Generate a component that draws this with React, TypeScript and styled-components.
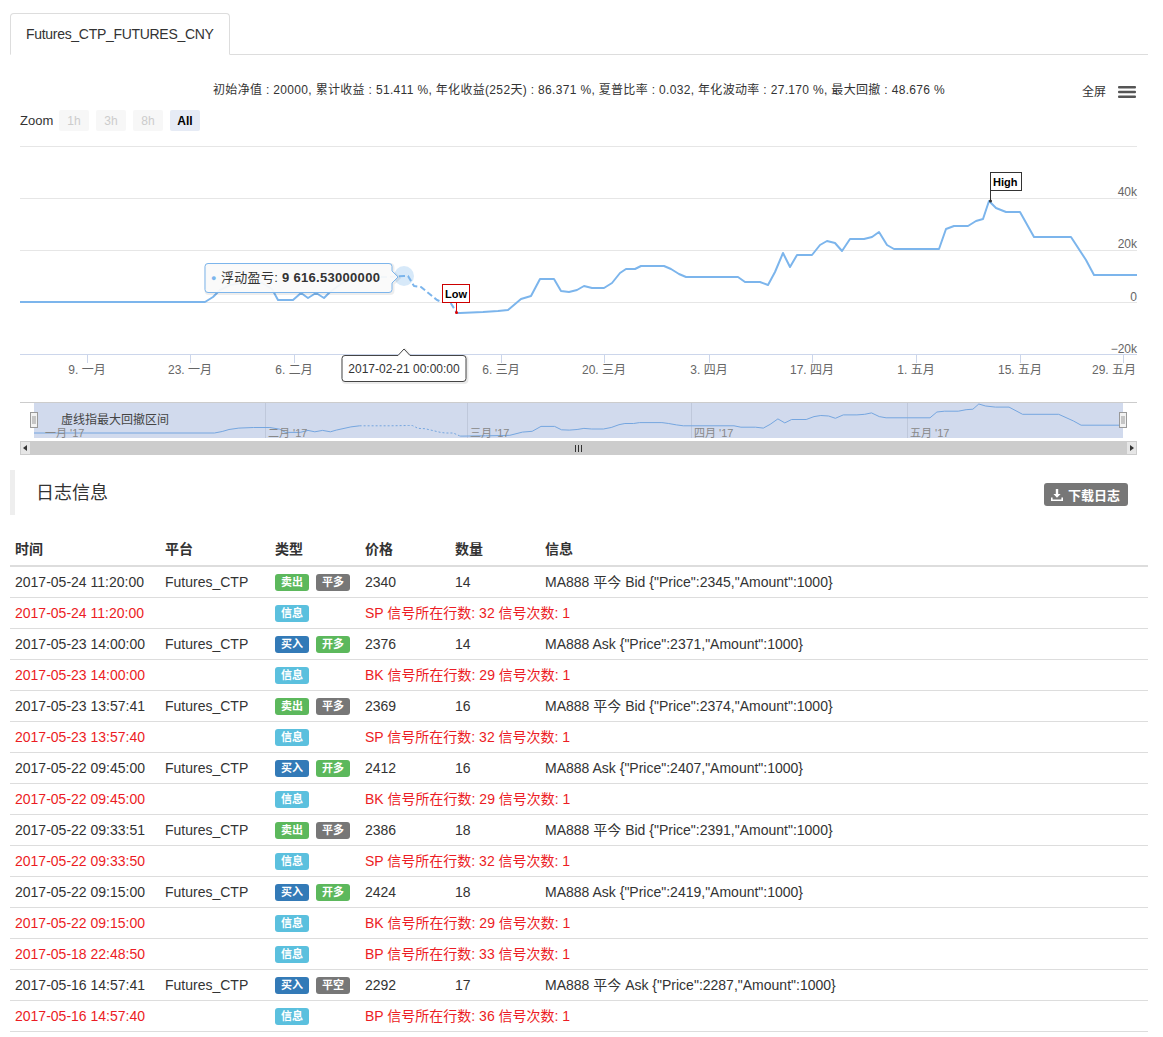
import React from 'react';
import styled, { createGlobalStyle } from 'styled-components';

const GlobalStyle = createGlobalStyle`
  html, body { margin: 0; padding: 0; background: #fff; }
  body {
    font-family: "Liberation Sans", Arial, "Noto Sans CJK SC", sans-serif;
    font-size: 14px;
    color: #333;
  }
  * { box-sizing: border-box; }
`;

const Page = styled.div`
  width: 1163px;
  padding: 13px 15px 20px 10px;
`;

const TabBar = styled.div`
  display: flex;
  border-bottom: 1px solid #ddd;
`;

const Tab = styled.div`
  margin-bottom: -1px;
  padding: 10px 15px;
  line-height: 20px;
  font-size: 14px;
  letter-spacing: -0.3px;
  color: #333;
  background: #fff;
  border: 1px solid #ddd;
  border-bottom-color: transparent;
  border-radius: 4px 4px 0 0;
`;

const ChartBox = styled.div`
  width: 1138px;
`;

const TitleRow = styled.div`
  display: grid;
  grid-template-columns: 1fr auto 1fr;
  align-items: start;
  margin-top: 26px;
`;

const Stats = styled.div`
  grid-column: 2;
  font-size: 12px;
  line-height: 18px;
  letter-spacing: 0.33px;
  color: #333;
  white-space: nowrap;
`;

const ExportControls = styled.div`
  grid-column: 3;
  justify-self: end;
  display: flex;
  align-items: center;
  gap: 12px;
  margin-top: 3px;
  padding-right: 12px;
  font-size: 12px;
  line-height: 16px;
  color: #333;
`;

const ZoomRow = styled.div`
  display: flex;
  align-items: center;
  gap: 7px;
  margin-top: 10px;
  padding-left: 10px;
  height: 21px;
`;

const ZoomLabel = styled.span`
  width: 32px;
  font-size: 13px;
  color: #333;
`;

const ZoomButton = styled.span<{ $active?: boolean }>`
  width: 30px;
  height: 21px;
  display: flex;
  align-items: center;
  justify-content: center;
  border-radius: 2px;
  font-size: 12px;
  background: ${p => (p.$active ? '#e6ebf5' : '#f7f7f7')};
  color: ${p => (p.$active ? '#000' : '#ccc')};
  font-weight: ${p => (p.$active ? 'bold' : 'normal')};
`;

const ChartSvg = styled.svg`
  display: block;
  margin-top: 9px;
  font-family: "Liberation Sans", Arial, "Noto Sans CJK SC", sans-serif;
`;

const LogSection = styled.div`
  margin-top: 10px;
  width: 1138px;
`;

const LogHeader = styled.div`
  display: flex;
  align-items: center;
  justify-content: space-between;
  height: 45px;
  border-left: 5px solid #eee;
  padding-left: 21px;
  padding-right: 20px;
`;

const LogTitle = styled.h3`
  margin: 0;
  font-size: 18px;
  font-weight: normal;
  color: #333;
  line-height: 24px;
`;

const DownloadButton = styled.span`
  display: flex;
  align-items: center;
  gap: 5px;
  height: 23px;
  margin-top: 4px;
  padding: 0 8px 0 7px;
  background: #777;
  color: #fff;
  font-size: 13px;
  font-weight: bold;
  border-radius: 3px;
`;

const Table = styled.table`
  width: 100%;
  margin-top: 14px;
  border-collapse: collapse;
  table-layout: fixed;
  font-size: 14px;
`;

const Th = styled.th`
  text-align: left;
  font-weight: bold;
  padding: 10px 5px 6px;
  line-height: 20px;
  border-bottom: 2px solid #ddd;
  color: #333;
`;

const Td = styled.td<{ $red?: boolean }>`
  padding: 5px;
  line-height: 20px;
  border-bottom: 1px solid #ddd;
  color: ${p => (p.$red ? '#ec1c24' : '#333')};
  white-space: nowrap;
`;

const BadgeGroup = styled.div`
  display: flex;
  align-items: center;
  gap: 7px;
  height: 20px;
`;

type Kind = 'success' | 'default' | 'primary' | 'info';
const badgeColors: Record<Kind, string> = {
  success: '#5cb85c',
  default: '#777777',
  primary: '#337ab7',
  info: '#5bc0de',
};

const Badge = styled.span<{ $kind: Kind }>`
  display: inline-block;
  padding: 3px 6px;
  font-size: 11px;
  line-height: 11px;
  font-weight: bold;
  color: #fff;
  border-radius: 3px;
  background: ${p => badgeColors[p.$kind]};
`;

type Pt = [number, number];

const solidA: Pt[] = [
  [20, 302], [205, 302], [213, 297], [220, 290], [230, 285], [245, 283], [262, 283],
  [272, 289], [278, 300], [293, 300], [301, 293], [308, 298], [316, 293], [324, 298],
  [330, 292], [345, 281], [354, 277],
];
const dashed: Pt[] = [
  [354, 277], [385, 277], [404, 276], [408, 276], [414, 286], [421, 287], [437, 300],
  [442, 302], [450, 302], [457, 313],
];
const solidB: Pt[] = [
  [457, 313], [460, 313], [483, 312], [498, 311], [508, 310], [521, 299], [531, 296],
  [540, 279], [554, 279], [561, 291], [569, 292], [577, 290], [584, 286], [592, 288],
  [604, 288], [612, 283], [620, 273], [626, 269], [635, 269], [641, 266], [664, 266],
  [671, 269], [679, 274], [686, 277], [738, 277], [745, 282], [760, 282], [768, 285],
  [775, 272], [783, 253], [790, 267], [797, 255], [812, 255], [820, 245], [827, 241],
  [835, 243], [842, 251], [850, 239], [864, 239], [872, 237], [879, 232], [887, 245],
  [894, 249], [939, 249], [946, 229], [954, 226], [968, 226], [976, 221], [983, 219],
  [989, 201], [996, 208], [1006, 212], [1020, 212], [1034, 237], [1071, 237],
  [1086, 260], [1094, 275], [1137, 275],
];

const toPath = (pts: Pt[], fx = (x: number) => x, fy = (y: number) => y) =>
  pts.map((p, i) => `${i ? 'L' : 'M'}${fx(p[0]).toFixed(1)} ${fy(p[1]).toFixed(1)}`).join(' ');

const navX = (x: number) => 34 + (x - 20) * 0.975;
const navY = (y: number) => 346.3 + y * 0.287;

const gridYs = [146, 198, 250, 302];
const yLabels: [number, string][] = [
  [196, '40k'], [248, '20k'], [301, '0'], [353, '\u221220k'],
];
const xTicks: [number, number, string][] = [
  [87, 87, '9. 一月'], [190, 190, '23. 一月'], [294, 294, '6. 二月'], [398, 398, ''],
  [501, 501, '6. 三月'], [604, 604, '20. 三月'], [709, 709, '3. 四月'],
  [812, 812, '17. 四月'], [916, 916, '1. 五月'], [1020, 1020, '15. 五月'],
  [1123, 1114, '29. 五月'],
];
const navMonths: [number, string][] = [
  [20, '一月 \'17'], [265, '二月 \'17'], [467, '三月 \'17'], [691, '四月 \'17'], [907, '五月 \'17'],
];

const Chart: React.FC = () => (
  <ChartSvg width={1138} height={320} viewBox="10 140 1138 320">
    {gridYs.map(y => (
      <line key={y} x1={20} x2={1137} y1={y + 0.5} y2={y + 0.5} stroke="#e6e6e6" strokeWidth={1} />
    ))}
    <line x1={20} x2={1137} y1={354.5} y2={354.5} stroke="#ccd6eb" strokeWidth={1} />
    {xTicks.map(([t]) => (
      <line key={t} x1={t + 0.5} x2={t + 0.5} y1={355} y2={363} stroke="#ccd6eb" strokeWidth={1} />
    ))}
    {xTicks.map(([t, lx, txt]) =>
      txt ? (
        <text key={`l${t}`} x={lx} y={374} fontSize={12} fill="#666" textAnchor="middle">{txt}</text>
      ) : null
    )}
    {yLabels.map(([y, txt]) => (
      <text key={txt} x={1137} y={y} fontSize={12} fill="#666" textAnchor="end">{txt}</text>
    ))}

    <path d={toPath(solidA)} fill="none" stroke="#7cb5ec" strokeWidth={2} strokeLinejoin="round" />
    <path d={toPath(dashed)} fill="none" stroke="#7cb5ec" strokeWidth={2} strokeDasharray="6 3" strokeLinejoin="round" />
    <path d={toPath(solidB)} fill="none" stroke="#7cb5ec" strokeWidth={2} strokeLinejoin="round" />

    <circle cx={404} cy={276} r={10} fill="#7cb5ec" fillOpacity={0.3} />

    {/* High flag */}
    <line x1={990.5} x2={990.5} y1={190} y2={201} stroke="#333" strokeWidth={1} />
    <circle cx={990.5} cy={201} r={1.5} fill="#333" />
    <rect x={990.5} y={172.5} width={31} height={18} fill="#fff" stroke="#333" strokeWidth={1} />
    <text x={993} y={185.5} fontSize={11} fontWeight="bold" fill="#000">High</text>

    {/* Low flag */}
    <line x1={456.5} x2={456.5} y1={302} y2={312} stroke="#d00" strokeWidth={1} />
    <circle cx={456.5} cy={312.5} r={1.5} fill="#d00" />
    <rect x={442.5} y={284.5} width={27} height={18} fill="#fff" stroke="#c00" strokeWidth={1} />
    <text x={456} y={297.5} fontSize={11} fontWeight="bold" fill="#000" textAnchor="middle">Low</text>

    {/* value tooltip */}
    <path
      d="M209 264.5 H390 Q393 264.5 393 267.5 V272 L399 278 L393 284 V290.5 Q393 293.5 390 293.5 H209 Q206 293.5 206 290.5 V267.5 Q206 264.5 209 264.5 Z"
      fill="none" stroke="rgba(0,0,0,0.07)" strokeWidth={3}
    />
    <path
      d="M208 263.5 H389 Q392 263.5 392 266.5 V271 L398 277 L392 283 V289.5 Q392 292.5 389 292.5 H208 Q205 292.5 205 289.5 V266.5 Q205 263.5 208 263.5 Z"
      fill="rgba(250,250,250,0.94)" stroke="#7cb5ec" strokeWidth={1}
    />
    <text x={211} y={281} fontSize={9} fill="#7cb5ec">●</text>
    <text x={221} y={282} fontSize={13} fill="#333" letterSpacing={0.3}>
      浮动盈亏: <tspan fontWeight="bold">9 616.53000000</tspan>
    </text>

    {/* date tooltip */}
    <path
      d="M346 356.5 H399 L405 350 L411 356.5 H464 Q467 356.5 467 359.5 V379.5 Q467 382.5 464 382.5 H346 Q343 382.5 343 379.5 V359.5 Q343 356.5 346 356.5 Z"
      fill="none" stroke="rgba(0,0,0,0.08)" strokeWidth={3}
    />
    <path
      d="M345 355.5 H398 L404 349 L410 355.5 H463 Q466 355.5 466 358.5 V378.5 Q466 381.5 463 381.5 H345 Q342 381.5 342 378.5 V358.5 Q342 355.5 345 355.5 Z"
      fill="#fff" stroke="#444" strokeWidth={1}
    />
    <text x={404} y={373} fontSize={12} fill="#333" textAnchor="middle">2017-02-21 00:00:00</text>

    {/* navigator */}
    {navMonths.map(([x]) =>
      x > 20 ? <line key={`g${x}`} x1={x + 0.5} x2={x + 0.5} y1={402} y2={438} stroke="#e6e6e6" strokeWidth={1} /> : null
    )}
    <path d={toPath(solidA, navX, navY)} fill="none" stroke="#7cb5ec" strokeWidth={1} />
    <path d={toPath(dashed, navX, navY)} fill="none" stroke="#7cb5ec" strokeWidth={1} strokeDasharray="2 2" />
    <path d={toPath(solidB, navX, navY)} fill="none" stroke="#7cb5ec" strokeWidth={1} />
    <rect x={34} y={403} width={1089} height={35} fill="rgba(102,133,194,0.3)" />
    <line x1={20} x2={1137} y1={402.5} y2={402.5} stroke="#cccccc" strokeWidth={1} />
    {navMonths.map(([x, txt]) => (
      <text key={`t${x}`} x={x === 20 ? 45 : x + 3} y={437} fontSize={11} fill="#888">{txt}</text>
    ))}
    <text x={61} y={424} fontSize={12} fill="#444">虚线指最大回撤区间</text>
    {[30.5, 1119.5].map(hx => (
      <g key={hx}>
        <rect x={hx} y={412.5} width={7} height={15} fill="#f2f2f2" stroke="#999" strokeWidth={1} />
        <line x1={hx + 2.5} x2={hx + 2.5} y1={416} y2={424} stroke="#999" strokeWidth={1} />
        <line x1={hx + 4.5} x2={hx + 4.5} y1={416} y2={424} stroke="#999" strokeWidth={1} />
      </g>
    ))}

    {/* scrollbar */}
    <rect x={20} y={441} width={1117} height={14} fill="#f2f2f2" />
    <rect x={30} y={441} width={1097} height={14} fill="#cccccc" />
    <rect x={20.5} y={441.5} width={10} height={13} fill="#e6e6e6" stroke="#cccccc" strokeWidth={1} />
    <rect x={1126.5} y={441.5} width={10} height={13} fill="#e6e6e6" stroke="#cccccc" strokeWidth={1} />
    <path d="M27 445 L23 448 L27 451 Z" fill="#333" />
    <path d="M1130 445 L1134 448 L1130 451 Z" fill="#333" />
    {[575.5, 578.5, 581.5].map(gx => (
      <line key={gx} x1={gx} x2={gx} y1={445} y2={452} stroke="#333" strokeWidth={1} />
    ))}
  </ChartSvg>
);

type Row = {
  time: string;
  red?: boolean;
  platform?: string;
  badges: [string, Kind][];
  price?: string;
  amount?: string;
  info: string;
};

const rows: Row[] = [
  { time: '2017-05-24 11:20:00', platform: 'Futures_CTP', badges: [['卖出', 'success'], ['平多', 'default']], price: '2340', amount: '14', info: 'MA888 平今 Bid {"Price":2345,"Amount":1000}' },
  { time: '2017-05-24 11:20:00', red: true, badges: [['信息', 'info']], info: 'SP 信号所在行数: 32 信号次数: 1' },
  { time: '2017-05-23 14:00:00', platform: 'Futures_CTP', badges: [['买入', 'primary'], ['开多', 'success']], price: '2376', amount: '14', info: 'MA888 Ask {"Price":2371,"Amount":1000}' },
  { time: '2017-05-23 14:00:00', red: true, badges: [['信息', 'info']], info: 'BK 信号所在行数: 29 信号次数: 1' },
  { time: '2017-05-23 13:57:41', platform: 'Futures_CTP', badges: [['卖出', 'success'], ['平多', 'default']], price: '2369', amount: '16', info: 'MA888 平今 Bid {"Price":2374,"Amount":1000}' },
  { time: '2017-05-23 13:57:40', red: true, badges: [['信息', 'info']], info: 'SP 信号所在行数: 32 信号次数: 1' },
  { time: '2017-05-22 09:45:00', platform: 'Futures_CTP', badges: [['买入', 'primary'], ['开多', 'success']], price: '2412', amount: '16', info: 'MA888 Ask {"Price":2407,"Amount":1000}' },
  { time: '2017-05-22 09:45:00', red: true, badges: [['信息', 'info']], info: 'BK 信号所在行数: 29 信号次数: 1' },
  { time: '2017-05-22 09:33:51', platform: 'Futures_CTP', badges: [['卖出', 'success'], ['平多', 'default']], price: '2386', amount: '18', info: 'MA888 平今 Bid {"Price":2391,"Amount":1000}' },
  { time: '2017-05-22 09:33:50', red: true, badges: [['信息', 'info']], info: 'SP 信号所在行数: 32 信号次数: 1' },
  { time: '2017-05-22 09:15:00', platform: 'Futures_CTP', badges: [['买入', 'primary'], ['开多', 'success']], price: '2424', amount: '18', info: 'MA888 Ask {"Price":2419,"Amount":1000}' },
  { time: '2017-05-22 09:15:00', red: true, badges: [['信息', 'info']], info: 'BK 信号所在行数: 29 信号次数: 1' },
  { time: '2017-05-18 22:48:50', red: true, badges: [['信息', 'info']], info: 'BP 信号所在行数: 33 信号次数: 1' },
  { time: '2017-05-16 14:57:41', platform: 'Futures_CTP', badges: [['买入', 'primary'], ['平空', 'default']], price: '2292', amount: '17', info: 'MA888 平今 Ask {"Price":2287,"Amount":1000}' },
  { time: '2017-05-16 14:57:40', red: true, badges: [['信息', 'info']], info: 'BP 信号所在行数: 36 信号次数: 1' },
];

const DownloadIcon = () => (
  <svg width="12" height="12" viewBox="0 0 12 12">
    <path d="M4.8 0 H7.2 V5 H9.6 L6 8.8 L2.4 5 H4.8 Z" fill="#fff" />
    <path d="M0 8.5 H1.6 V10.4 H10.4 V8.5 H12 V12 H0 Z" fill="#fff" />
  </svg>
);

const MenuIcon = () => (
  <svg width="18" height="12" viewBox="0 0 18 12">
    <rect x="0" y="0" width="18" height="2.6" rx="1" fill="#555" />
    <rect x="0" y="4.7" width="18" height="2.6" rx="1" fill="#555" />
    <rect x="0" y="9.4" width="18" height="2.6" rx="1" fill="#555" />
  </svg>
);

export default function App() {
  return (
    <>
      <GlobalStyle />
      <Page>
        <TabBar>
          <Tab>Futures_CTP_FUTURES_CNY</Tab>
        </TabBar>
        <ChartBox>
          <TitleRow>
            <Stats>
              初始净值 : 20000, 累计收益 : 51.411 %, 年化收益(252天) : 86.371 %, 夏普比率 : 0.032, 年化波动率 : 27.170 %, 最大回撤 : 48.676 %
            </Stats>
            <ExportControls>
              <span>全屏</span>
              <MenuIcon />
            </ExportControls>
          </TitleRow>
          <ZoomRow>
            <ZoomLabel>Zoom</ZoomLabel>
            <ZoomButton>1h</ZoomButton>
            <ZoomButton>3h</ZoomButton>
            <ZoomButton>8h</ZoomButton>
            <ZoomButton $active>All</ZoomButton>
          </ZoomRow>
          <Chart />
        </ChartBox>
        <LogSection>
          <LogHeader>
            <LogTitle>日志信息</LogTitle>
            <DownloadButton>
              <DownloadIcon />
              下载日志
            </DownloadButton>
          </LogHeader>
          <Table>
            <colgroup>
              <col style={{ width: 150 }} />
              <col style={{ width: 110 }} />
              <col style={{ width: 90 }} />
              <col style={{ width: 90 }} />
              <col style={{ width: 90 }} />
              <col />
            </colgroup>
            <thead>
              <tr>
                <Th>时间</Th>
                <Th>平台</Th>
                <Th>类型</Th>
                <Th>价格</Th>
                <Th>数量</Th>
                <Th>信息</Th>
              </tr>
            </thead>
            <tbody>
              {rows.map((r, i) => (
                <tr key={i}>
                  <Td $red={r.red}>{r.time}</Td>
                  <Td>{r.platform ?? ''}</Td>
                  <Td>
                    <BadgeGroup>
                      {r.badges.map(([t, k]) => (
                        <Badge key={t} $kind={k}>{t}</Badge>
                      ))}
                    </BadgeGroup>
                  </Td>
                  {r.red ? (
                    <Td $red colSpan={3}>{r.info}</Td>
                  ) : (
                    <>
                      <Td>{r.price}</Td>
                      <Td>{r.amount}</Td>
                      <Td>{r.info}</Td>
                    </>
                  )}
                </tr>
              ))}
            </tbody>
          </Table>
        </LogSection>
      </Page>
    </>
  );
}
